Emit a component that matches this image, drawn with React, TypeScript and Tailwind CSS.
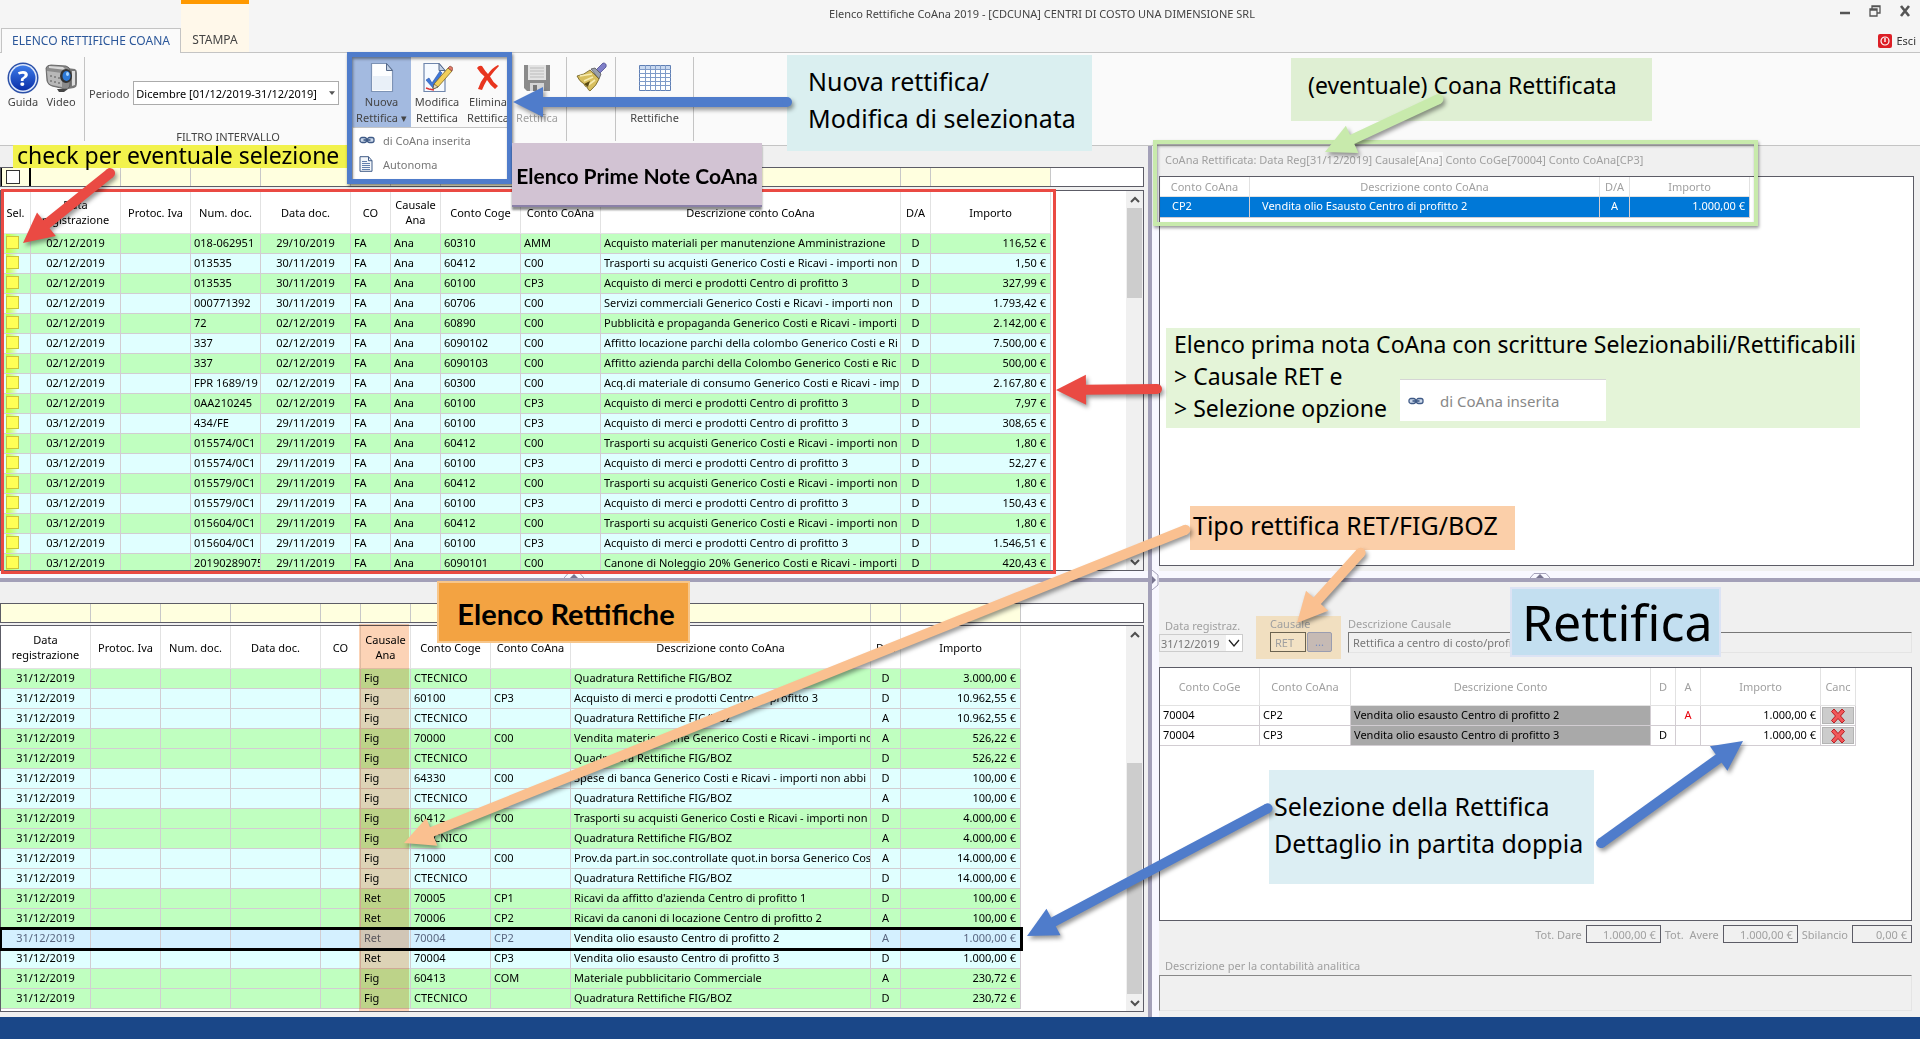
import React from "react";

type Align = "left" | "center" | "right";
type Column = { label: string; width: string; align: Align };

const ALIGN: Record<Align, string> = {
  left: "text-left pl-[3px]",
  center: "text-center",
  right: "text-right pr-1",
};

const DOC_COLUMNS: Column[] = [
  { label: "Data registrazione", width: "w-[90px]", align: "center" },
  { label: "Protoc. Iva", width: "w-[70px]", align: "left" },
  { label: "Num. doc.", width: "w-[70px]", align: "left" },
  { label: "Data doc.", width: "w-[90px]", align: "center" },
  { label: "CO", width: "w-[40px]", align: "left" },
  { label: "Causale Ana", width: "w-[50px]", align: "left" },
  { label: "Conto Coge", width: "w-[80px]", align: "left" },
  { label: "Conto CoAna", width: "w-[80px]", align: "left" },
  { label: "Descrizione conto CoAna", width: "w-[300px]", align: "left" },
  { label: "D/A", width: "w-[30px]", align: "center" },
  { label: "Importo", width: "w-[120px]", align: "right" },
];

const MERCI = "Acquisto di merci e prodotti Centro di profitto 3";
const TRASPORTI = "Trasporti su acquisti Generico Costi e Ricavi - importi non";
const QUADRATURA = "Quadratura Rettifiche FIG/BOZ";

const ENTRIES: string[][] = [
  ["02/12/2019", "018-062951", "29/10/2019", "60310", "AMM", "Acquisto materiali per manutenzione Amministrazione", "116,52 €"],
  ["02/12/2019", "013535", "30/11/2019", "60412", "C00", TRASPORTI, "1,50 €"],
  ["02/12/2019", "013535", "30/11/2019", "60100", "CP3", MERCI, "327,99 €"],
  ["02/12/2019", "000771392", "30/11/2019", "60706", "C00", "Servizi commerciali Generico Costi e Ricavi - importi non", "1.793,42 €"],
  ["02/12/2019", "72", "02/12/2019", "60890", "C00", "Pubblicità e propaganda Generico Costi e Ricavi - importi", "2.142,00 €"],
  ["02/12/2019", "337", "02/12/2019", "6090102", "C00", "Affitto locazione parchi della colombo Generico Costi e Ri", "7.500,00 €"],
  ["02/12/2019", "337", "02/12/2019", "6090103", "C00", "Affitto azienda parchi della Colombo Generico Costi e Ric", "500,00 €"],
  ["02/12/2019", "FPR 1689/19", "02/12/2019", "60300", "C00", "Acq.di materiale di consumo Generico Costi e Ricavi - imp", "2.167,80 €"],
  ["02/12/2019", "0AA210245", "02/12/2019", "60100", "CP3", MERCI, "7,97 €"],
  ["03/12/2019", "434/FE", "29/11/2019", "60100", "CP3", MERCI, "308,65 €"],
  ["03/12/2019", "015574/0C1", "29/11/2019", "60412", "C00", TRASPORTI, "1,80 €"],
  ["03/12/2019", "015574/0C1", "29/11/2019", "60100", "CP3", MERCI, "52,27 €"],
  ["03/12/2019", "015579/0C1", "29/11/2019", "60412", "C00", TRASPORTI, "1,80 €"],
  ["03/12/2019", "015579/0C1", "29/11/2019", "60100", "CP3", MERCI, "150,43 €"],
  ["03/12/2019", "015604/0C1", "29/11/2019", "60412", "C00", TRASPORTI, "1,80 €"],
  ["03/12/2019", "015604/0C1", "29/11/2019", "60100", "CP3", MERCI, "1.546,51 €"],
  ["03/12/2019", "20190289075", "29/11/2019", "6090101", "C00", "Canone di Noleggio 20% Generico Costi e Ricavi - importi", "420,43 €"],
];

type Adjustment = { green: boolean; cells: [string, string, string, string, string, string] };

const ADJUSTMENTS: Adjustment[] = [
  { green: true, cells: ["Fig", "CTECNICO", "", QUADRATURA, "D", "3.000,00 €"] },
  { green: false, cells: ["Fig", "60100", "CP3", MERCI, "D", "10.962,55 €"] },
  { green: false, cells: ["Fig", "CTECNICO", "", QUADRATURA, "A", "10.962,55 €"] },
  { green: true, cells: ["Fig", "70000", "C00", "Vendita materie prime Generico Costi e Ricavi - importi no", "A", "526,22 €"] },
  { green: true, cells: ["Fig", "CTECNICO", "", QUADRATURA, "D", "526,22 €"] },
  { green: false, cells: ["Fig", "64330", "C00", "Spese di banca Generico Costi e Ricavi - importi non abbi", "D", "100,00 €"] },
  { green: false, cells: ["Fig", "CTECNICO", "", QUADRATURA, "A", "100,00 €"] },
  { green: true, cells: ["Fig", "60412", "C00", TRASPORTI, "D", "4.000,00 €"] },
  { green: true, cells: ["Fig", "CTECNICO", "", QUADRATURA, "A", "4.000,00 €"] },
  { green: false, cells: ["Fig", "71000", "C00", "Prov.da part.in soc.controllate quot.in borsa Generico Cos", "A", "14.000,00 €"] },
  { green: false, cells: ["Fig", "CTECNICO", "", QUADRATURA, "D", "14.000,00 €"] },
  { green: true, cells: ["Ret", "70005", "CP1", "Ricavi da affitto d'azienda Centro di profitto 1", "D", "100,00 €"] },
  { green: true, cells: ["Ret", "70006", "CP2", "Ricavi da canoni di locazione Centro di profitto 2", "A", "100,00 €"] },
  { green: false, cells: ["Ret", "70004", "CP2", "Vendita olio esausto Centro di profitto 2", "A", "1.000,00 €"] },
  { green: false, cells: ["Ret", "70004", "CP3", "Vendita olio esausto Centro di profitto 3", "D", "1.000,00 €"] },
  { green: true, cells: ["Fig", "60413", "COM", "Materiale pubblicitario Commerciale", "A", "230,72 €"] },
  { green: true, cells: ["Fig", "CTECNICO", "", QUADRATURA, "D", "230,72 €"] },
];

const SELECTED_ADJUSTMENT = 13;

/* ---------- icons ---------- */

function HelpIcon() {
  return (
    <svg viewBox="0 0 32 32" className="size-8" aria-hidden="true">
      <defs>
        <linearGradient id="help" x1="0" y1="0" x2="0" y2="1">
          <stop offset="0" stopColor="#3d7be8" />
          <stop offset="1" stopColor="#0a2fa8" />
        </linearGradient>
      </defs>
      <circle cx="16" cy="16" r="15.5" fill="#2b50a8" />
      <circle cx="16" cy="16" r="14" fill="#dfe9fb" />
      <circle cx="16" cy="16" r="12.5" fill="url(#help)" />
      <text x="16" y="24" textAnchor="middle" fontSize="22" fontWeight="700" fill="#fff">?</text>
    </svg>
  );
}

function CameraIcon() {
  return (
    <svg viewBox="0 0 32 32" className="size-8" aria-hidden="true">
      <path d="M22 6l8 1q2 1 2 4v10q0 4-3 5l-6 1z" fill="#777" />
      <path d="M27 9h3v14l-3 1z" fill="#ddd" />
      <path d="M1 6q1-3 5-3l15 1q4 1 4 5v13q0 5-5 5L7 24q-4-1-5-5z" fill="#8b8b8b" stroke="#555" strokeWidth=".8" />
      <path d="M2 9l15 2v14L7 23q-4-1-4-5z" fill="#b8b8b8" />
      <path d="M4 4l14 1 3 3-17-2z" fill="#d8d8d8" />
      <g fill="#777">
        <circle cx="6" cy="14" r="1" /><circle cx="10" cy="15" r="1" /><circle cx="14" cy="16" r="1" />
        <circle cx="6" cy="19" r="1" /><circle cx="10" cy="20" r="1" /><circle cx="14" cy="21" r="1" />
      </g>
      <ellipse cx="21" cy="14" rx="6" ry="7" fill="#333" />
      <ellipse cx="21.500" cy="14" rx="4" ry="5" fill="#2d79d6" />
      <ellipse cx="22.500" cy="12" rx="1.500" ry="2" fill="#a9d6ff" />
      <path d="M12 27h11l-4 3h-5z" fill="#444" />
    </svg>
  );
}

function PageIcon() {
  return (
    <svg viewBox="0 0 24 32" className="h-8 w-6" aria-hidden="true">
      <path d="M1.500 1.500h15l6 7v21h-21z" fill="#fdfeff" stroke="#7d93b5" strokeWidth="1.200" />
      <path d="M3 14h18v14H3z" fill="#e9f0f8" />
      <path d="M16.500 1.500v7h6z" fill="#c2d0e4" stroke="#55698a" />
    </svg>
  );
}

function EditIcon() {
  return (
    <svg viewBox="0 0 32 32" className="size-8" aria-hidden="true">
      <path d="M3 1.500h15l6 7v21H3z" fill="#f6faff" stroke="#6f86ad" strokeWidth="1.200" />
      <path d="M18 1.500v7h6z" fill="#c2d0e4" stroke="#55698a" />
      <path d="M5 18l3-2 3 5 8-12 2 2-9 15z" fill="#3f77d8" stroke="#2450a8" strokeWidth=".6" />
      <path d="M13 22L27 6l4 3-14 16-5 2z" fill="#f2cf5b" stroke="#7a6425" strokeWidth=".8" />
      <path d="M27 6l2-2q3 1 3 3l-1 2z" fill="#e07a6a" stroke="#7a3b2b" strokeWidth=".6" />
      <path d="M12 27l1-5 4 3z" fill="#e9d9b8" stroke="#444" strokeWidth=".6" />
      <path d="M5 26l3 1 5 1" stroke="#d33" strokeWidth="1.500" fill="none" />
    </svg>
  );
}

function DeleteIcon() {
  return (
    <svg viewBox="0 0 32 32" className="size-8" aria-hidden="true">
      <path d="M5 6q2-3 5-2 3 5 6 8 4-6 10-9l1 1q-5 5-9 10.500 3 6 8 9.500l-3 3q-5-4-8-9-3 5-5 10l-4-1q2-7 6.500-12.500Q8 11 5 6z" fill="#e8351f" />
    </svg>
  );
}

function DisketteIcon() {
  return (
    <svg viewBox="0 0 28 28" className="size-7" aria-hidden="true">
      <path d="M1 1h26v26H4l-3-3z" fill="#8a8a8a" />
      <path d="M5 1h18v15H5z" fill="#e3e3e3" />
      <path d="M7 4h14M7 7h14M7 10h14M7 13h14" stroke="#bbb" />
      <path d="M7 19h14v8H7z" fill="#d5d5d5" />
      <path d="M10 21h4v6h-4z" fill="#777" />
    </svg>
  );
}

function BroomIcon() {
  return (
    <svg viewBox="0 0 32 32" className="size-8" aria-hidden="true">
      <path d="M28 1q4 0 3 4l-7 7-4-3z" fill="#7f7fc8" stroke="#4d4d90" strokeWidth=".8" />
      <path d="M16 7l4-1 6 6-2 5z" fill="#9aa0ad" stroke="#555" strokeWidth=".8" />
      <path d="M2 14q7-1 13-6l9 9q-2 6-9 12-2-1-3-4-2 0-3-3-5-3-7-8z" fill="#d8bf5e" stroke="#6b5a1c" strokeWidth=".8" />
      <path d="M5 14l12-2M9 19l9-4M12 24l8-6" stroke="#f7ecb0" strokeWidth="1.600" />
      <path d="M9 22l6-3-2 6z" fill="#5b4a12" />
    </svg>
  );
}

function SheetIcon() {
  return (
    <svg viewBox="0 0 32 26" className="h-[26px] w-8" aria-hidden="true">
      <path d="M.5.5h31v25H.5z" fill="#fff" stroke="#5f7fb4" />
      <path d="M1 1h30v3H1z" fill="#c9d9f0" />
      <path d="M6.500 0v26M11.500 0v26M16.500 0v26M21.500 0v26M26.500 0v26M0 4.500h32M0 8.500h32M0 12.500h32M0 16.500h32M0 20.500h32" stroke="#7f9bc8" />
    </svg>
  );
}

function ChainIcon() {
  return (
    <svg viewBox="0 0 16 8" className="h-2 w-4" aria-hidden="true">
      <rect x="1" y="1.500" width="6.500" height="5" rx="2" fill="#cbd8ea" stroke="#3f5a86" strokeWidth="1.300" />
      <rect x="8.500" y="1.500" width="6.500" height="5" rx="2" fill="#cbd8ea" stroke="#3f5a86" strokeWidth="1.300" />
      <path d="M4.500 4h7" stroke="#3f5a86" strokeWidth="1.600" />
    </svg>
  );
}

function DocumentIcon() {
  return (
    <svg viewBox="0 0 14 16" className="h-4 w-3.5" aria-hidden="true">
      <path d="M1 .7h8.500l3.500 4v10.600H1z" fill="#f4f7fb" stroke="#3f5a86" />
      <path d="M9.500.7v4H13" fill="none" stroke="#3f5a86" />
      <path d="M3 5.500h5M3 7.500h8M3 9.500h8M3 11.500h8M3 13.500h8" stroke="#6480ad" />
    </svg>
  );
}

function CancelIcon() {
  return (
    <svg viewBox="0 0 16 16" className="size-4" aria-hidden="true">
      <path d="M1.500 3.500L4 1l4 4.500L12 1l2.500 2.500L10.500 8l4 4.500L12 15l-4-4.500L4 15l-2.500-2.500L5.500 8z" fill="#f2585a" stroke="#b91a1f" strokeWidth="1" />
    </svg>
  );
}

function Chevron({ up = false }: { up?: boolean }) {
  return (
    <svg viewBox="0 0 10 8" className="h-2 w-2.5" aria-hidden="true">
      <path d={up ? "M1 6l4-4 4 4" : "M1 2l4 4 4-4"} fill="none" stroke="#505050" strokeWidth="2" />
    </svg>
  );
}

/* ---------- grid building blocks ---------- */

function ScrollRail({ thumb }: { thumb: React.ReactNode }) {
  return (
    <div className="flex w-[17px] shrink-0 flex-col items-center bg-[#f0f0f0]" aria-hidden="true">
      <div className="flex h-[17px] items-center"><Chevron up /></div>
      <div className="flex w-full flex-1 flex-col px-px">{thumb}</div>
      <div className="flex h-[17px] items-center"><Chevron /></div>
    </div>
  );
}

function FilterRow({ withSelection }: { withSelection?: boolean }) {
  return (
    <div className="mr-1 flex h-5 overflow-hidden border border-[#5c5c66] bg-white">
      {withSelection && (
        <label className="flex w-[30px] shrink-0 items-center border-r-2 border-l border-black bg-[#ffffdf] pl-1">
          <input type="checkbox" aria-label="Seleziona tutto" className="size-3.5 appearance-none border border-[#333] bg-white" />
        </label>
      )}
      {DOC_COLUMNS.map((c) => (
        <input
          key={c.label}
          type="text"
          aria-label={"Filtro " + c.label}
          className={c.width + " shrink-0 border-r border-[#c8c8c8] bg-[#ffffdf] px-1 outline-none"}
        />
      ))}
    </div>
  );
}

function HeaderCell({ children, className = "" }: { children?: React.ReactNode; className?: string }) {
  return (
    <th scope="col" className={"border-r border-b border-[#e2e2e2] px-0 text-center font-normal " + className}>
      {children}
    </th>
  );
}

const CELL = "overflow-hidden border-r border-b border-[#d2cdd2] align-top leading-[17px] whitespace-nowrap ";

function Splitter() {
  return (
    <div className="flex flex-col items-center border-b-4 border-[#a3a0b8] bg-[#f8f8ff] pt-0.5">
      <svg viewBox="0 0 20 5" className="h-[5px] w-5" aria-hidden="true">
        <path d="M0 5l4-4.500h12L20 5" fill="none" stroke="#a3a0b8" />
        <path d="M6 5l4-4 4 4z" fill="#77748f" />
      </svg>
    </div>
  );
}

function EntriesGrid() {
  return (
    <div className="mr-1 flex h-[381px] overflow-hidden border border-[#5c5c66] bg-white">
      <div className="min-w-0 flex-1 overflow-hidden">
        <table className="w-[1050px] table-fixed border-separate border-spacing-0">
          <thead>
            <tr className="h-[43px]">
              <HeaderCell className="w-[30px]">Sel.</HeaderCell>
              {DOC_COLUMNS.map((c) => <HeaderCell key={c.label} className={c.width}>{c.label}</HeaderCell>)}
            </tr>
          </thead>
          <tbody>
            {ENTRIES.map((r, i) => {
              const values = [r[0], "", r[1], r[2], "FA", "Ana", r[3], r[4], r[5], "D", r[6]];
              return (
                <tr key={i} className={i % 2 === 0 ? "h-5 bg-[#c0ffc0]" : "h-5 bg-[#e0ffff]"}>
                  <td className={CELL + "bg-linear-to-r from-transparent from-[5px] via-[#c8ff30] via-[5px] to-transparent to-[17px] pt-0.5 pl-[5px]"}>
                    <input
                      type="checkbox"
                      aria-label={"Seleziona riga " + (i + 1)}
                      className="block size-[13px] appearance-none border border-[#cbc53c] bg-[#ffff55]"
                    />
                  </td>
                  {values.map((v, j) => (
                    <td key={j} className={CELL + ALIGN[DOC_COLUMNS[j].align]}>{v}</td>
                  ))}
                </tr>
              );
            })}
          </tbody>
        </table>
      </div>
      <ScrollRail thumb={<div className="h-[90px] bg-[#cdcdcd]" />} />
    </div>
  );
}

function AdjustmentsGrid() {
  return (
    <div className="mr-1 flex min-h-[387px] flex-1 border border-[#5c5c66] bg-white">
      <div className="relative min-w-0 flex-1">
        <table className="w-[1020px] table-fixed border-separate border-spacing-0">
          <thead>
            <tr className="h-[43px]">
              {DOC_COLUMNS.map((c) => <HeaderCell key={c.label} className={c.width}>{c.label}</HeaderCell>)}
            </tr>
          </thead>
          <tbody>
            {ADJUSTMENTS.map(({ green, cells }, i) => {
              const selected = i === SELECTED_ADJUSTMENT;
              const values = ["31/12/2019", "", "", "", "", ...cells];
              return (
                <tr
                  key={i}
                  className={
                    selected
                      ? "h-5 bg-[#d4f0ff] text-[#5a6680] outline-3 -outline-offset-1 outline-black"
                      : green ? "h-5 bg-[#c0ffc0]" : "h-5 bg-[#e0ffff]"
                  }
                >
                  {values.map((v, j) => (
                    <td key={j} className={CELL + ALIGN[DOC_COLUMNS[j].align] + (selected && j === 8 ? " bg-[#e0ffff] text-black" : "")}>
                      {v}
                    </td>
                  ))}
                </tr>
              );
            })}
          </tbody>
        </table>
        <div className="absolute -top-0.5 bottom-0 left-[358px] w-[50px] bg-[#fcd3b6] mix-blend-multiply" />
      </div>
      <ScrollRail thumb={<><div className="h-[120px]" /><div className="flex-1 bg-[#cdcdcd]" /></>} />
    </div>
  );
}

/* ---------- window parts ---------- */

function TitleBar() {
  return (
    <header className="relative flex h-[53px] items-end border-b border-[#c4c4c4] bg-[#f5f5f5]">
      <nav className="-mb-px flex h-[53px] items-end text-xs">
        <button className="ml-px h-[25px] w-[180px] border border-b-0 border-[#c4c4c4] bg-[#fafafa] text-[#2b579a]">ELENCO RETTIFICHE COANA</button>
        <button className="h-[53px] w-[68px] border-t-4 border-b border-t-[#ff9900] border-b-[#c4c4c4] bg-[#fff8ea] pt-6 text-[#444]">STAMPA</button>
      </nav>
      <h1 className="absolute inset-x-0 top-1.5 pl-[164px] text-center text-[11px] leading-4 text-[#444]">
        Elenco Rettifiche CoAna 2019 - [CDCUNA] CENTRI DI COSTO UNA DIMENSIONE SRL
      </h1>
      <div className="absolute top-1 right-2 flex items-center gap-4 text-[#555]">
        <button aria-label="Riduci a icona" className="flex size-3.5 items-center">
          <svg viewBox="0 0 14 14" className="size-3.5"><path d="M2 9h10" stroke="currentColor" strokeWidth="2.500" /></svg>
        </button>
        <button aria-label="Ripristina" className="size-3.5">
          <svg viewBox="0 0 14 14" className="size-3.5"><path d="M4 5V2h8v7H9M2 5h7v7H2zM2 6h7M4 2.500h8" fill="none" stroke="currentColor" strokeWidth="1.300" /></svg>
        </button>
        <button aria-label="Chiudi" className="size-3.5">
          <svg viewBox="0 0 14 14" className="size-3.5"><path d="M3 2l8 10M11 2L3 12" stroke="currentColor" strokeWidth="2.600" /></svg>
        </button>
      </div>
      <button className="absolute right-1 bottom-1 flex items-center gap-1 text-[#333]">
        <svg viewBox="0 0 14 14" className="size-3.5" aria-hidden="true">
          <rect width="14" height="14" rx="2" fill="#dc1f26" />
          <circle cx="7" cy="7" r="4" fill="none" stroke="#fff" strokeWidth="1.200" />
          <path d="M7 4v4" stroke="#fff" strokeWidth="1.400" />
        </svg>
        Esci
      </button>
    </header>
  );
}

function RibbonButton({ icon, lines, className = "" }: { icon: React.ReactNode; lines: string[]; className?: string }) {
  return (
    <button className={"flex shrink-0 flex-col items-center pt-1 leading-4 whitespace-nowrap " + className}>
      <span className="flex h-[33px] items-center">{icon}</span>
      {lines.map((l, i) => <span key={i} className="h-4">{l}</span>)}
    </button>
  );
}

function Ribbon() {
  return (
    <div className="flex h-[93px] border-b border-[#c4c4c4] bg-[#fafafa] py-1 text-[#444]">
      <div className="flex w-[85px] border-r border-[#c4c4c4] pl-1">
        <RibbonButton icon={<HelpIcon />} lines={["Guida"]} className="w-[38px]" />
        <RibbonButton icon={<CameraIcon />} lines={["Video"]} className="w-[38px]" />
      </div>
      <div className="flex w-[262px] flex-col pt-6 pl-1">
        <div className="flex items-center gap-1">
          <label htmlFor="periodo">Periodo</label>
          <div className="relative ml-auto w-[210px]">
            <select id="periodo" className="h-6 w-full appearance-none border border-[#ababab] bg-white pl-0.5 text-black">
              <option>Dicembre [01/12/2019-31/12/2019]</option>
            </select>
            <svg viewBox="0 0 8 5" className="absolute top-2.5 right-1 h-1 w-1.5" aria-hidden="true"><path d="M0 0h8L4 5z" fill="#555" /></svg>
          </div>
          <span className="w-1" />
        </div>
        <p className="mt-auto -mb-1 pl-5 text-center leading-4">FILTRO INTERVALLO</p>
      </div>
      <div className="relative flex w-[220px] border-r border-[#c4c4c4] pl-[5px]">
        <RibbonButton icon={<PageIcon />} lines={["Nuova", "Rettifica ▾"]} className="h-[70px] w-[59px] bg-[#a3bae0]" />
        <RibbonButton icon={<EditIcon />} lines={["Modifica", "Rettifica"]} className="h-[70px] w-[52px]" />
        <RibbonButton icon={<DeleteIcon />} lines={["Elimina", "Rettifica"]} className="h-[70px] w-[50px]" />
        <RibbonButton icon={<DisketteIcon />} lines={["", "Rettifica"]} className="w-[48px] text-[#a0a0a0]" />
        <div role="menu" className="absolute top-[70px] left-[5px] z-10 w-[156px] border border-[#c6c6c6] bg-white pb-1 text-[#777]">
          <button role="menuitem" className="flex h-6 w-full items-center gap-2 pl-1.5"><ChainIcon />di CoAna inserita</button>
          <button role="menuitem" className="flex h-6 w-full items-center gap-2.5 pl-1.5"><DocumentIcon />Autonoma</button>
        </div>
      </div>
      <RibbonButton icon={<BroomIcon />} lines={[]} className="w-[49px] border-r border-[#c4c4c4]" />
      <RibbonButton icon={<SheetIcon />} lines={["", "Rettifiche"]} className="w-[78px] border-r border-[#c4c4c4]" />
    </div>
  );
}

function RectifiedEntry() {
  return (
    <section className="mr-1.5 flex h-[425px] flex-col pb-[5px] text-[#a0a0a0]">
      <p className="h-[30px] pl-1.5 leading-[27px] whitespace-pre">
        CoAna Rettificata: Data Reg[31/12/2019] Causale<span className="bg-[#f8f8f8]">[Ana]</span> Conto CoGe[70004] Conto CoAna[CP3]
      </p>
      <div className="flex-1 border border-[#5c5c66] bg-white">
        <table className="w-[590px] table-fixed border-separate border-spacing-0">
          <thead>
            <tr className="h-5">
              <HeaderCell className="w-[90px]">Conto CoAna</HeaderCell>
              <HeaderCell className="w-[350px]">Descrizione conto CoAna</HeaderCell>
              <HeaderCell className="w-[30px]">D/A</HeaderCell>
              <HeaderCell className="w-[120px]">Importo</HeaderCell>
            </tr>
          </thead>
          <tbody>
            <tr className="h-[21px] bg-[#0078d7] text-white">
              <td className={CELL + "pl-3"}>CP2</td>
              <td className={CELL + "pl-3"}>Vendita olio Esausto Centro di profitto 2</td>
              <td className={CELL + "text-center"}>A</td>
              <td className={CELL + "pr-1 text-right"}>1.000,00 €</td>
            </tr>
          </tbody>
        </table>
      </div>
    </section>
  );
}

function AmountField({ id, label, value, width }: { id: string; label: string; value: string; width: string }) {
  return (
    <div className="flex items-center gap-1">
      <label htmlFor={id} className="whitespace-pre">{label}</label>
      <input id={id} readOnly value={value} className={width + " h-[18px] border border-[#5c5c66] bg-[#f0f0f0] pr-1 text-right"} />
    </div>
  );
}

function AdjustmentDetail() {
  const rows = [
    { account: "CP2", text: "Vendita olio esausto Centro di profitto 2", d: "", a: "A" },
    { account: "CP3", text: "Vendita olio esausto Centro di profitto 3", d: "D", a: "" },
  ];
  return (
    <section className="mr-2 flex flex-1 flex-col pb-1.5 text-[#a0a0a0]">
      <form className="flex h-[85px] items-start pt-[34px]">
        <div className="flex w-[97px] flex-col pt-0.5">
          <label htmlFor="data" className="pl-1.5 leading-4">Data registraz.</label>
          <div className="relative w-[84px]">
            <input id="data" readOnly value="31/12/2019" className="block h-[18px] w-full border border-[#ccc] bg-[#f0f0f0] pl-px text-[#777]" />
            <svg viewBox="0 0 16 16" className="absolute top-px right-px size-4 bg-white" aria-hidden="true"><path d="M3 5l5 6 5-6" fill="none" stroke="#222" strokeWidth="1.300" /></svg>
          </div>
        </div>
        <div className="flex h-[43px] w-[85px] flex-col bg-[#f1dfc0] pl-3.5">
          <label htmlFor="causale" className="leading-4">Causale</label>
          <div className="flex gap-px">
            <input id="causale" readOnly value="RET" className="h-5 w-9 border border-[#6b6350] bg-[#f3e2c4] pl-1" />
            <button type="button" aria-label="Scegli causale" className="h-5 w-[25px] rounded-xs border border-[#9a9db0] bg-[#c6bab4] leading-3 text-[#7a8fc0]">...</button>
          </div>
        </div>
        <div className="flex flex-1 flex-col pl-[7px]">
          <label htmlFor="descr" className="leading-4">Descrizione Causale</label>
          <input id="descr" readOnly value="Rettifica a centro di costo/profitto" className="h-[21px] w-full border border-t-[#777] border-r-[#e4e4e4] border-b-[#e4e4e4] border-l-[#777] bg-[#f0f0f0] pl-1 text-[#777]" />
        </div>
      </form>
      <div className="min-h-[254px] flex-1 border border-[#5c5c66] bg-white">
        <table className="w-[696px] table-fixed border-separate border-spacing-0">
          <thead>
            <tr className="h-[38px]">
              <HeaderCell className="w-[100px]">Conto CoGe</HeaderCell>
              <HeaderCell className="w-[91px]">Conto CoAna</HeaderCell>
              <HeaderCell className="w-[300px]">Descrizione Conto</HeaderCell>
              <HeaderCell className="w-[25px]">D</HeaderCell>
              <HeaderCell className="w-[25px]">A</HeaderCell>
              <HeaderCell className="w-[120px]">Importo</HeaderCell>
              <HeaderCell className="w-[35px]">Canc</HeaderCell>
            </tr>
          </thead>
          <tbody className="text-black">
            {rows.map((r) => (
              <tr key={r.account} className="h-5">
                <td className={CELL + "pl-[3px]"}>70004</td>
                <td className={CELL + "pl-[3px]"}>{r.account}</td>
                <td className={CELL + "bg-[#a9a9a9] pl-[3px]"}>{r.text}</td>
                <td className={CELL + "text-center"}>{r.d}</td>
                <td className={CELL + "text-center text-red-600"}>{r.a}</td>
                <td className={CELL + "pr-1 text-right"}>1.000,00 €</td>
                <td className={CELL + "p-px"}>
                  <button aria-label={"Cancella " + r.account} className="flex h-[17px] w-full items-center justify-center border border-[#b4b4b4] bg-[#ccc]"><CancelIcon /></button>
                </td>
              </tr>
            ))}
          </tbody>
        </table>
      </div>
      <div className="mt-1 flex items-center justify-end gap-1">
        <AmountField id="dare" label="Tot. Dare" value="1.000,00 €" width="w-[75px]" />
        <AmountField id="avere" label="Tot.  Avere" value="1.000,00 €" width="w-[75px]" />
        <AmountField id="sbilancio" label="Sbilancio" value="0,00 €" width="w-[60px]" />
      </div>
      <label htmlFor="analitica" className="mt-3.5 pl-1.5 leading-[18px]">Descrizione per la contabilità analitica</label>
      <textarea id="analitica" className="h-9 w-full resize-none border border-t-[#888] border-r-[#e4e4e4] border-b-[#e4e4e4] border-l-[#888] bg-[#f0f0f0]" />
    </section>
  );
}

/* ---------- guide annotations drawn over the window ---------- */

type ArrowProps = { from: [number, number]; to: [number, number]; color: string; width?: number; head?: number; half?: number };

function Arrow({ from, to, color, width = 10, head = 30, half = 15 }: ArrowProps) {
  const dx = to[0] - from[0];
  const dy = to[1] - from[1];
  const len = Math.hypot(dx, dy);
  const angle = (Math.atan2(dy, dx) * 180) / Math.PI;
  return (
    <g className="drop-shadow-[2px_3px_2px_rgba(0,0,0,0.4)]">
      <g transform={`translate(${from[0]} ${from[1]}) rotate(${angle})`}>
        <path d={`M${width / 2} 0H${len - head + 2}`} stroke={color} strokeWidth={width} />
        <circle cx={width / 2} cy="0" r={width / 2} fill={color} />
        <path d={`M${len} 0l${-head} ${-half}v${half * 2}z`} fill={color} />
      </g>
    </g>
  );
}

const NOTE = "absolute text-black whitespace-nowrap ";

function Annotations() {
  return (
    <div className="pointer-events-none absolute inset-0 z-20 overflow-hidden">
      <p className={NOTE + "top-[145px] left-[13px] h-[23px] w-[334px] bg-[#f2f24c] pl-1 text-[23px] leading-5"}>check per eventuale selezione</p>
      <div className="absolute top-[52px] left-[347px] h-[132px] w-[165px] border-5 border-[#4f7ccb] shadow-[1px_2px_3px_rgba(0,0,0,0.5),inset_1px_2px_3px_rgba(0,0,0,0.4)]" />
      <div className="absolute top-[189px] left-px h-[385px] w-[1055px] border-3 border-[#ea4a43]" />
      <div className="absolute top-[140px] left-[1153px] h-[86px] w-[605px] border-4 border-[#c8eaac] shadow-[1px_2px_3px_rgba(0,0,0,0.4),inset_1px_2px_3px_rgba(0,0,0,0.4)]" />
      <p className={NOTE + "top-[55px] left-[787px] h-24 w-[305px] bg-[#daeff0] pt-2 pl-[21px] text-[25px] leading-[37px]"}>
        Nuova rettifica/<br />Modifica di selezionata
      </p>
      <p className={NOTE + "top-[143px] left-[512px] h-[64px] w-[250px] border-b-2 border-[#8a80a8] bg-[#d2c3d3] text-center font-['Lato','Noto_Sans',sans-serif] text-[21px] leading-[66px] font-bold shadow-[0_3px_2px_rgba(0,0,0,0.45)]"}>Elenco Prime Note CoAna</p>
      <p className={NOTE + "top-[581px] left-[437px] h-[62px] w-[253px] border-2 border-[#f7c68a] bg-[#f3a342] pl-[5px] text-center font-['Lato','Noto_Sans',sans-serif] text-[29px] leading-[62px] font-bold"}>Elenco Rettifiche</p>
      <p className={NOTE + "top-[58px] left-[1291px] h-[63px] w-[361px] bg-[#dfefd3] pl-[17px] text-[23px] leading-[55px]"}>(eventuale) Coana Rettificata</p>
      <div className={NOTE + "top-[328px] left-[1166px] h-[100px] w-[694px] bg-[#e4f4d8] pl-2 text-[23px] leading-8"}>
        <p>Elenco prima nota CoAna con scritture Selezionabili/Rettificabili</p>
        <p>&gt; Causale RET e</p>
        <p>&gt; Selezione opzione</p>
        <div className="absolute top-[51px] left-[234px] flex h-[42px] w-[206px] items-center gap-4 border-t border-[#d5d5d5] bg-white pl-2 text-[15px] text-[#888]"><ChainIcon />di CoAna inserita</div>
      </div>
      <p className={NOTE + "top-[506px] left-[1190px] h-11 w-[325px] bg-[#fbcfa9] pl-[3px] text-[25px] leading-[39px]"}>Tipo rettifica RET/FIG/BOZ</p>
      <p className={NOTE + "top-[587px] left-[1510px] h-[70px] w-[211px] border-2 border-[#dce3f4] bg-[#c3dff0] pl-2.5 text-[50px] leading-[66px]"}>Rettifica</p>
      <p className={NOTE + "top-[770px] left-[1269px] h-[114px] w-[325px] bg-[#dceef3] pt-[18px] pl-[5px] text-[25px] leading-[37px]"}>
        Selezione della Rettifica<br />Dettaglio in partita doppia
      </p>
      <svg className="absolute inset-0 size-full" aria-hidden="true">
        <Arrow from={[792, 102]} to={[513, 102]} color="#4f7ccb" />
        <Arrow from={[114, 170]} to={[23, 243]} color="#ea4a43" />
        <Arrow from={[1162, 389]} to={[1056, 390]} color="#ea4a43" />
        <Arrow from={[1443, 97]} to={[1325, 152]} color="#c8eaac" />
        <Arrow from={[1190, 528]} to={[404, 843]} color="#fac090" />
        <Arrow from={[1364, 549]} to={[1297, 623]} color="#fac090" />
        <Arrow from={[1272, 806]} to={[1027, 936]} color="#4f7ccb" />
        <Arrow from={[1597, 846]} to={[1743, 741]} color="#4f7ccb" />
      </svg>
    </div>
  );
}

export default function App() {
  return (
    <div className="relative flex min-h-screen flex-col overflow-hidden bg-[#f0f0f0] font-['Noto_Sans',sans-serif] text-[11px] leading-[15px] text-black">
      <TitleBar />
      <Ribbon />
      <main className="grid flex-1 grid-cols-[minmax(0,1148fr)_11px_minmax(0,761fr)]">
        <div className="flex flex-col pb-[5px]">
          <div className="h-[21px]" />
          <FilterRow withSelection />
          <div className="h-[3px]" />
          <EntriesGrid />
          <Splitter />
          <div className="h-[21px]" />
          <FilterRow />
          <div className="h-0.5" />
          <AdjustmentsGrid />
        </div>
        <div className="border-l-4 border-[#a3a0b8] bg-[#f8f8ff] pt-[424px]">
          <svg viewBox="0 0 7 20" className="h-5 w-[7px]" aria-hidden="true">
            <path d="M0 0l6 5v10l-6 5" fill="none" stroke="#a3a0b8" />
            <path d="M0 6l4 4-4 4z" fill="#77748f" />
          </svg>
        </div>
        <div className="flex flex-col">
          <RectifiedEntry />
          <Splitter />
          <AdjustmentDetail />
        </div>
      </main>
      <footer className="h-[22px] bg-[#1a4788]" />
      <Annotations />
    </div>
  );
}
